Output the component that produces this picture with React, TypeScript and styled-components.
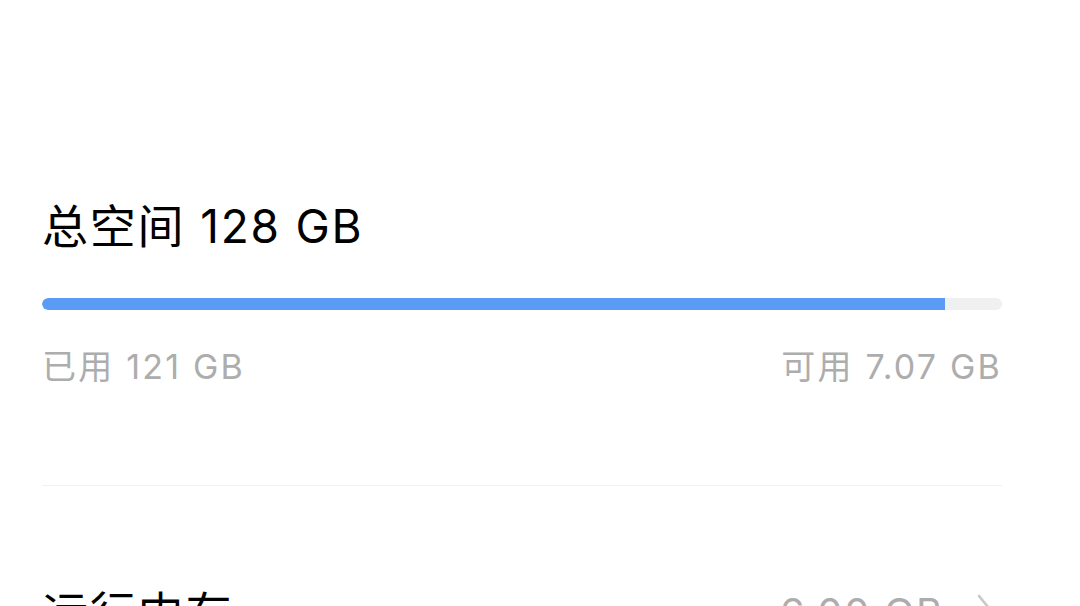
import React from 'react';
import styled, { createGlobalStyle } from 'styled-components';

const GlobalStyle = createGlobalStyle`
  html, body {
    margin: 0;
    padding: 0;
    background: #ffffff;
  }
  body {
    font-family: Inter, "Noto Sans CJK SC", "Noto Sans", sans-serif;
    overflow: hidden;
  }
`;

const Page = styled.div`
  width: 1080px;
  height: 606px;
  box-sizing: border-box;
  padding: 199px 78px 0 42px;
  overflow: hidden;
`;

const Title = styled.div`
  font-size: 46px;
  line-height: 54px;
  letter-spacing: 1.8px;
  color: #000;
  font-weight: 400;
`;

const Track = styled.div`
  margin-top: 45px;
  height: 12px;
  border-radius: 6px;
  background: #f0f0f0;
  overflow: hidden;
  display: flex;
`;

const Fill = styled.div`
  height: 100%;
  background: #5a9cf5;
  border-radius: 6px 0 0 6px;
`;

const Legend = styled.div`
  margin-top: 37px;
  display: flex;
  justify-content: space-between;
  font-size: 34px;
  line-height: 40px;
  letter-spacing: 2.2px;
  color: #adadad;
`;

const Divider = styled.div`
  margin-top: 98px;
  height: 1px;
  background: #f2f2f2;
`;

const Row = styled.div`
  margin-top: 100px;
  display: flex;
  align-items: center;
  justify-content: space-between;
`;

const RowLabel = styled.div`
  font-size: 46px;
  line-height: 54px;
  letter-spacing: 1.8px;
  color: #000;
`;

const RowValue = styled.div`
  display: flex;
  align-items: center;
  gap: 32px;
  font-size: 40px;
  line-height: 54px;
  letter-spacing: 1.8px;
  color: #adadad;
  margin-right: 6px;
`;

const Chevron = () => (
  <svg width="20" height="40" viewBox="0 0 20 40" fill="none">
    <path d="M3 3 L17 20 L3 37" stroke="#c8c8c8" strokeWidth="2.6" strokeLinecap="round" strokeLinejoin="round" />
  </svg>
);

const usedPercent = 94.06;

export default function App() {
  return (
    <>
      <GlobalStyle />
      <Page>
        <Title>总空间 128 GB</Title>
        <Track>
          <Fill style={{ width: `${usedPercent}%` }} />
        </Track>
        <Legend>
          <span>已用 121 GB</span>
          <span>可用 7.07 GB</span>
        </Legend>
        <Divider />
        <Row>
          <RowLabel>运行内存</RowLabel>
          <RowValue>
            <span>6.00 GB</span>
            <Chevron />
          </RowValue>
        </Row>
      </Page>
    </>
  );
}
